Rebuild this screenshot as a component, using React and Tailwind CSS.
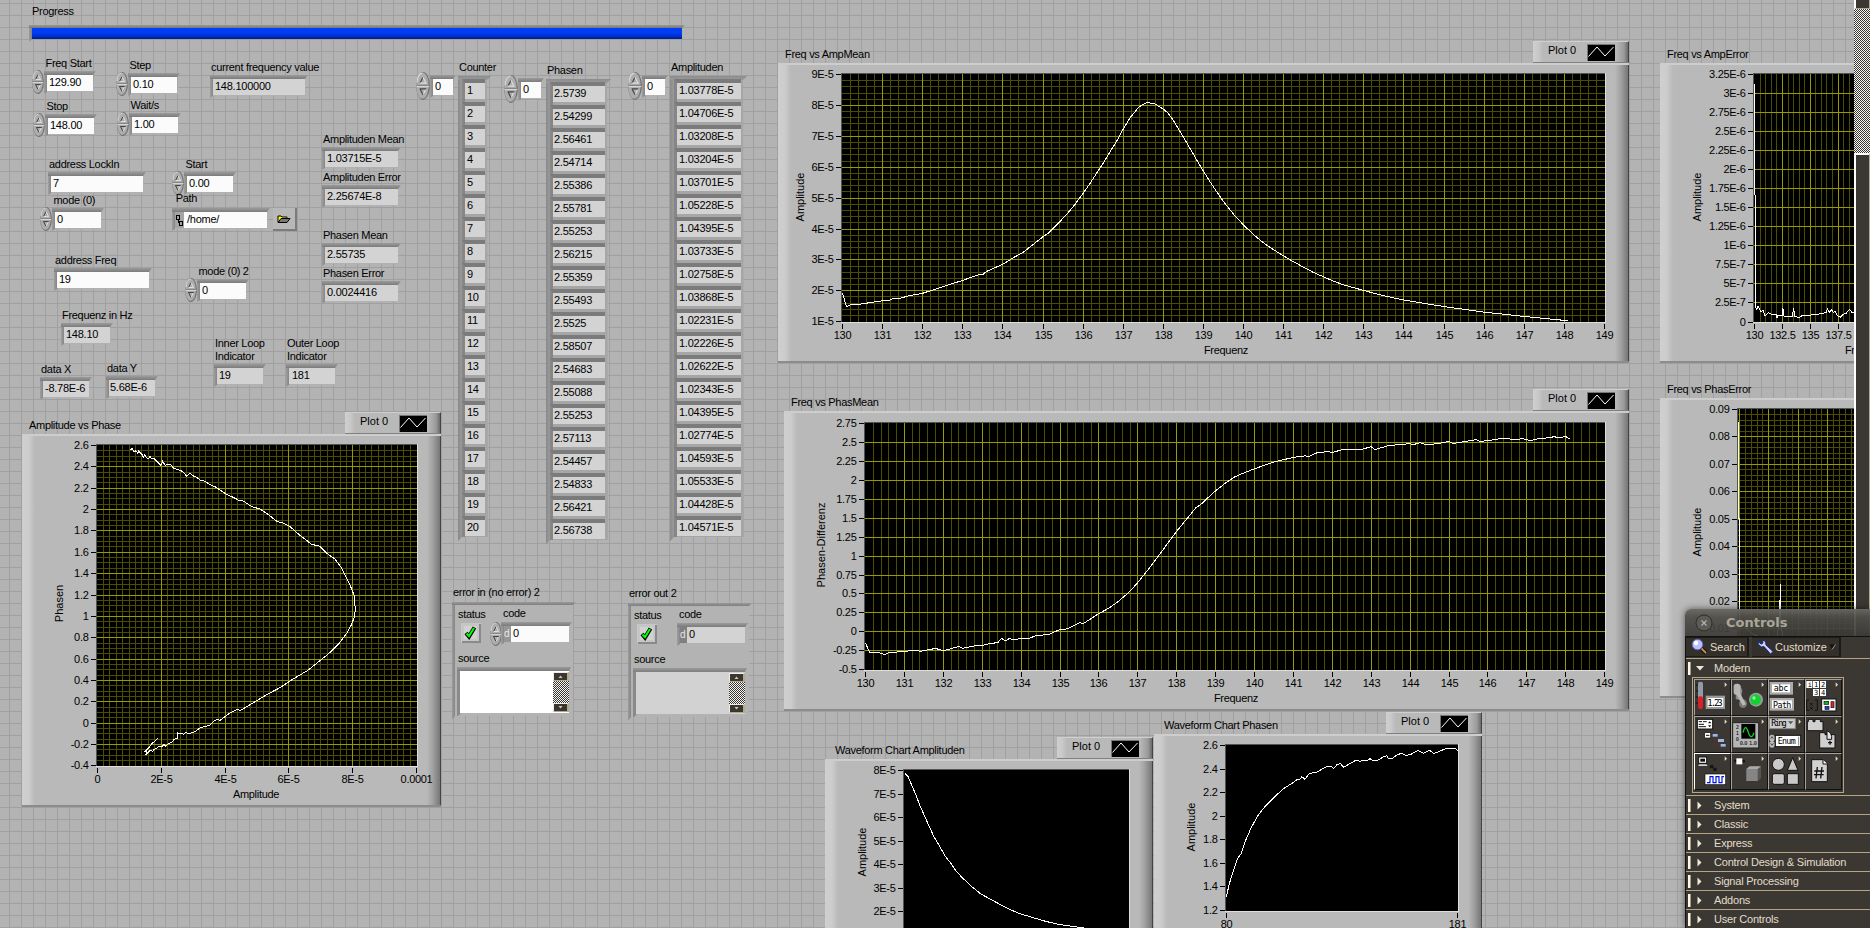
import React from "react";

const FONT = "'Liberation Sans', Arial, sans-serif";

/* ---------- small building blocks of the front panel ---------- */

function Label({ className = "", children }) {
  return <div className={"whitespace-pre text-[11px] leading-[14px] tracking-[-0.3px] text-black " + className}>{children}</div>;
}

function Spinner({ large = false }) {
  return (
    <svg className={"shrink-0 " + (large ? "h-[28px] w-[14px]" : "h-[24px] w-[12px]")} viewBox="0 0 12 24" preserveAspectRatio="none">
      <ellipse cx="6" cy="12" rx="5.9" ry="11.9" fill="#6f6f6f" />
      <ellipse cx="5.500" cy="11.700" rx="5.300" ry="11.300" fill="#adadad" />
      <path d="M0.900 9 Q1.500 1.500 5.500 1" stroke="#dadada" fill="none" />
      <path d="M10 19 Q8.500 22.500 6 23" stroke="#8c8c8c" fill="none" />
      <path d="M0.600 11.500 H11.400" stroke="#858585" />
      <path d="M0.600 12.500 H11.400" stroke="#d5d5d5" />
      <path d="M3.500 9.500 L6 4.500" stroke="#444" fill="none" />
      <path d="M6 4.500 L8.500 9.500 H3.500" stroke="#dedede" fill="none" />
      <path d="M8.500 14.500 L6 19.500" stroke="#dedede" fill="none" />
      <path d="M3.200 14.500 H8.800 M3.500 14.500 L6 19.500" stroke="#444" fill="none" />
    </svg>
  );
}

/* recessed box; w is the width of its bright face */
function Field({ w, pad = "pl-[2px]", grey = false, children }) {
  return (
    <div className="shrink-0 bg-[#b1b1b1] bg-[linear-gradient(to_bottom,#9b9b9b_0,#7b7b7b_4px,transparent_4px),linear-gradient(to_right,#9f9f9f_0,#858585_3px,transparent_3px)] pb-[3px] pl-[3px] pr-[3px] pt-[4px] [clip-path:polygon(0_0,100%_0,calc(100%-3px)_4px,calc(100%-2px)_calc(100%-2px),3px_calc(100%-2px),0_100%)]">
      <div
        className={"h-[16px] whitespace-pre text-[11px] leading-[15px] tracking-[-0.25px] text-black " + pad + " " + (grey ? "bg-[#d3d3d3]" : "bg-[#fbfbfb]")}
        style={{ width: w }}
      >
        {children}
      </div>
    </div>
  );
}

/* a labelled control or indicator that lies freely on the panel */
function Item({ x, y, label, lines, spin, w, v, pad, grey, children }) {
  return (
    <div className="absolute flex flex-col" style={{ left: x, top: y }}>
      {lines && <Label className="h-[13px] pl-px">{lines}</Label>}
      <Label className={spin ? "pl-[13.5px]" : "pl-px"}>{label}</Label>
      {children || (
        <div className="flex items-start">
          {spin && <Spinner />}
          <div className="pt-px"><Field w={w} pad={pad} grey={grey}>{v}</Field></div>
        </div>
      )}
    </div>
  );
}

function ArrayControl({ x, y, label, w, values, pad = "pl-px" }) {
  return (
    <div className="absolute flex gap-[2px]" style={{ left: x, top: y }}>
      <div className="flex items-start pt-[12px]">
        <Spinner large />
        <div className="pt-[3px]"><Field w={20}>0</Field></div>
      </div>
      <div className="flex flex-col gap-[2px]">
        <Label className="w-0 pl-px">{label}</Label>
        <div className="flex flex-col bg-[#a6a6a6] bg-[linear-gradient(to_bottom,#8c8c8c_0,#9b9b9b_4px,transparent_4px),linear-gradient(to_right,#8a8a8a_0,#9a9a9a_4px,transparent_4px)] pb-[2px] pl-[4px] pr-[6px] pt-[3px] [clip-path:polygon(0_0,100%_0,calc(100%-4px)_4px,calc(100%-3px)_calc(100%-4px),4px_calc(100%-4px),0_100%)]">
          {values.map((v, i) => (
            <div key={i} className="h-[23px] border-l-[3px] border-t-[4px] border-l-[#868686] border-t-[#7b7b7b]">
              <div className={"h-[16px] bg-[#d3d3d3] text-[11px] leading-[15px] tracking-[-0.25px] text-black " + pad} style={{ width: w }}>
                {v}
              </div>
            </div>
          ))}
        </div>
      </div>
    </div>
  );
}

/* ---------- charts ---------- */

function Legend() {
  return (
    <div className="flex h-[22px] w-[96px] items-start justify-between border-b border-r border-t border-b-[#808080] border-r-[#444] border-t-[#cfcfcf] bg-[linear-gradient(to_right,#cfcfcf_0,#c9c9c9_5px,#b9b9b9_10px,#b9b9b9_calc(100%-12px),#9a9a9a_calc(100%-4px),#6a6a6a_100%)] pl-[15px] pr-[13px]">
      <span className="pt-px text-[11px] leading-[14px]">Plot 0</span>
      <svg className="mt-[2px]" width="28" height="17">
        <rect width="28" height="17" fill="#000" />
        <path d="M0 0.500H28M0.500 0V17" stroke="#777" />
        <path d="M1.500 12.500 L10 3 L18 12 L26.500 3" stroke="#fff" fill="none" />
      </svg>
    </div>
  );
}

function gridLines(axis, from, to) {
  const major = [];
  const minor = [];
  const n = axis.minor || 1;
  const count = Math.ceil((to - axis.start) / (axis.step / n)) + 1;
  for (let i = 0; i < count; i++) {
    const p = Math.floor(axis.start + (i * axis.step) / n);
    if (p < from || p >= to) continue;
    (i % n === 0 ? major : minor).push(p);
  }
  return { major, minor };
}

function Chart({ title, titlePad = "pl-[7px]", legend = true, panel, plot, xAxis, yAxis, xTitle, yTitle, trace, grid = true }) {
  const [px, py, pw, ph] = panel;
  const [gx, gy, gw, gh] = plot;
  const v = gridLines(xAxis, gx + 1, gx + gw - 1);
  const h = gridLines(yAxis, gy + 1, gy + gh - 1);
  return (
    <section className="absolute flex flex-col" style={{ left: px, top: py - 22, width: pw }}>
      <header className={"flex h-[22px] items-end justify-between " + titlePad}>
        <Label className="pb-[2px]">{title}</Label>
        {legend && <Legend />}
      </header>
      <div className="border-b-2 border-t-2 border-b-[#8c8c8c] border-t-[#cdcdcd] bg-[linear-gradient(to_right,#cfcfcf_0,#cccccc_7px,#b9b9b9_13px,#b9b9b9_calc(100%-14px),#a0a0a0_calc(100%-8px),#777_calc(100%-1px),#444_calc(100%-1px))]">
        <svg className="block" width={pw} height={ph - 4} viewBox={`${px} ${py + 2} ${pw} ${ph - 4}`}>
          <rect x={gx - 1} y={gy - 1} width={gw + 2} height={gh + 2} fill="#dedede" />
          <rect x={gx - 1} y={gy - 1} width={gw + 1} height={gh + 1} fill="#4f5656" />
          <rect x={gx} y={gy} width={gw} height={gh} fill="#000" />
          {grid && (
            <g shapeRendering="crispEdges">
              <path stroke="#4d4d00" d={v.minor.map((p) => `M${p + 0.5} ${gy}v${gh}`).join("") + h.minor.map((p) => `M${gx} ${p + 0.5}h${gw}`).join("")} />
              <path stroke="#999900" d={v.major.map((p) => `M${p + 0.5} ${gy}v${gh}`).join("") + h.major.map((p) => `M${gx} ${p + 0.5}h${gw}`).join("")} />
            </g>
          )}
          <polyline points={trace.map((p) => p.join(",")).join(" ")} fill="none" stroke="#fff" shapeRendering="crispEdges" />
          <g fontFamily={FONT} fontSize="11" fill="#000" letterSpacing="-0.3">
            {yAxis.labels.map((t, i) => {
              const y = Math.floor(yAxis.start + i * yAxis.step) + 0.5;
              return (
                <g key={t + i}>
                  <path d={`M${gx - 6} ${y}h5`} stroke="#000" />
                  <text x={gx - 8.5} y={y + 3.5} textAnchor="end">{t}</text>
                </g>
              );
            })}
            {xAxis.labels.map((t, i) => {
              const x = Math.floor(xAxis.start + i * xAxis.step) + 0.5;
              return (
                <g key={t + i}>
                  <path d={`M${x} ${gy + gh + 2}v5`} stroke="#000" />
                  <text x={x} y={gy + gh + 17} textAnchor="middle">{t}</text>
                </g>
              );
            })}
            {xTitle && <text x={xTitle[1]} y={xTitle[2]} textAnchor="middle">{xTitle[0]}</text>}
            <text transform={`translate(${yTitle[1]} ${yTitle[2]}) rotate(-90)`} textAnchor="middle" letterSpacing="0">{yTitle[0]}</text>
          </g>
        </svg>
      </div>
    </section>
  );
}

const pairs = (s, ox = 0, oy = 0, sx = 1, sy = 1) =>
  s.trim().split(/\s+/).map((p) => {
    const [a, b] = p.split(",").map(Number);
    return [ox + a / sx, oy + b / sy];
  });

const xyTrace = pairs(
  `391,180 397,175 402,186 408,182 414,190 416,183 426,193 430,202 434,194 440,204 446,205 450,200 456,207 462,205 470,213
  483,226 488,214 496,226 502,222 512,223 520,234 530,238 545,243 553,250 560,259 570,250 580,258 590,262 600,270 615,274
  630,284 645,290 660,300 680,313 700,322 715,330 730,333 755,350 780,357 800,370 832,395 850,399 870,410 900,436 935,463
  960,469 980,490 1005,507 1022,530 1040,565 1052,590 1062,615 1063,640 1067,655 1063,680 1055,703 1040,730 1020,757
  1000,778 980,796 960,812 925,840 900,855 870,873 840,893 800,914 770,932 735,953 722,961 710,959 690,969 660,991 650,988
  640,995 630,1005 600,1014 580,1028 565,1030 556,1028 550,1033 543,1029 536,1031 532,1027 533,1045 522,1048 515,1058
  505,1060 498,1069 492,1063 486,1069 475,1070 470,1076 462,1078 458,1084 450,1080 445,1087 438,1093 440,1083 432,1086
  445,1075 455,1062 473,1045`, 0, 390, 3, 3);

const ampMeanTrace = pairs(
  `130,1.92 130.1,1.48 130.2,1.55 130.4,1.56 131,1.68 131.15,1.69 131.3,1.76 131.4,1.75 131.7,1.85 132,1.92 132.5,2.13 133,2.34
  133.4,2.52 133.5,2.53 133.6,2.63 134,2.86 134.3,3.1 134.5,3.24 135,3.75 135.15,3.88 135.42,4.24 135.6,4.49 135.8,4.8 136,5.15
  136.2,5.53 136.5,6.13 136.7,6.56 136.85,6.87 137,7.23 137.17,7.6 137.4,7.96 137.6,8.1 137.8,8.04 138,7.88 138.12,7.75
  138.25,7.52 138.5,6.98 138.75,6.42 139,5.87 139.17,5.52 139.33,5.21 139.5,4.89 139.75,4.48 140,4.13 140.25,3.82 140.5,3.55
  140.75,3.33 141,3.13 141.25,2.94 141.5,2.76 141.75,2.59 142,2.45 142.25,2.31 142.5,2.19 143,2.01 143.5,1.84 144,1.7
  145,1.49 146,1.31 147,1.17 148.1,1.03`).map(([f, a]) => [842.5 + (f - 130) * 40.1, 74.5 + (9 - a) * 30.9]);

const phasMeanTrace = pairs(
  `130,-.147 130.1,-.27 130.3,-.27 130.5,-.30 130.6,-.275 131,-.26 131.3,-.24 131.4,-.26 131.8,-.22 132,-.25 132.4,-.195
  132.5,-.218 132.9,-.175 133,-.18 133.2,-.156 133.4,-.143 133.5,-.09 133.6,-.117 133.7,-.09 133.8,-.103 134,-.09 134.2,-.086
  134.4,-.05 134.7,-.037 135,.029 135.1,.029 135.2,.042 135.5,.12 135.6,.108 136,.24 136.25,.31 136.5,.4 136.8,.534 137,.65
  137.25,.81 137.5,.98 138,1.326 138.3,1.515 138.5,1.64 138.6,1.67 138.85,1.79 139,1.86 139.25,1.96 139.5,2.045 139.75,2.1
  140,2.15 140.5,2.24 141,2.3 141.3,2.32 141.4,2.31 141.6,2.36 141.9,2.377 142,2.364 142.3,2.41 142.6,2.41 142.7,2.4 143,2.44
  143.1,2.403 143.4,2.45 143.7,2.47 144,2.48 144.1,2.47 144.25,2.495 144.4,2.47 144.7,2.48 145,2.51 145.1,2.483 145.3,2.5
  145.7,2.535 145.8,2.51 146.2,2.535 146.3,2.548 146.5,2.548 146.7,2.535 146.9,2.548 147.1,2.52 147.3,2.548 147.6,2.56
  147.7,2.575 147.8,2.56 148,2.575 148.1,2.545`).map(([f, a]) => [865.5 + (f - 130) * 38.9, 423.3 + (2.75 - a) * 75.8]);

const ampErrTrace = pairs(
  `1298,162 1298,495 1300,497 1300,830 1303,838 1306,828 1312,845 1318,842 1322,858 1330,848 1340,854 1348,853 1350,865
  1352,856 1362,858 1364,835 1366,858 1386,860 1389,835 1392,860 1402,862 1410,856 1425,857 1435,852 1440,855 1455,850
  1465,848 1468,837 1472,847 1478,840 1482,848 1486,843 1490,855 1498,862 1505,853 1512,850 1520,838 1526,848 1536,845`, 1200, 30, 2.34, 3);
const phasErrTrace = pairs(
  `1260,155 1260,444 1262,446 1262,760 1275,770 1290,790 1310,800 1350,800 1355,760 1356,690 1358,690 1358,643 1359,760 1364,800 1530,820`, 1200, 370, 2.34, 3);
const waveAmpTrace = pairs(
  `234,218 242,230 250,255 260,285 268,315 278,345 288,375 300,410 312,437 325,468 338,490 350,514 365,535 385,560 405,582
  430,600 460,622 490,640 520,652 550,664 580,673 630,683 660,688`, 800, 700, 2.24, 3);
const wavePhasTrace = pairs(
  `955,590 962,550 970,515 980,475 988,462 997,425 1010,385 1025,348 1040,322 1055,302 1070,282 1085,264 1100,252 1112,240
  1120,238 1124,230 1131,238 1140,222 1150,218 1158,216 1170,207 1180,199 1190,198 1195,206 1202,195 1210,190 1218,202
  1230,192 1245,181 1255,184 1262,180 1270,182 1277,176 1283,182 1295,180 1305,172 1314,167 1318,176 1328,174 1338,164
  1348,160 1357,167 1370,162 1384,151 1397,160 1410,151 1420,161 1435,152 1448,146 1468,146 1473,152`, 800, 700, 2.24, 3);

const FREQS = Array.from({ length: 20 }, (_, i) => String(130 + i));

const CHARTS = [
  {
    title: "Amplitude vs Phase", panel: [22, 434, 419, 373], plot: [97, 445, 320, 321],
    xAxis: { start: 97.2, step: 63.9, minor: 10, labels: ["0", "2E-5", "4E-5", "6E-5", "8E-5", "0.0001"] },
    yAxis: { start: 445.5, step: 21.36, minor: 4, labels: ["2.6", "2.4", "2.2", "2", "1.8", "1.6", "1.4", "1.2", "1", "0.8", "0.6", "0.4", "0.2", "0", "-0.2", "-0.4"] },
    xTitle: ["Amplitude", 256, 798], yTitle: ["Phasen", 62.5, 603.5], trace: xyTrace,
  },
  {
    title: "Freq vs AmpMean", panel: [778, 63, 851, 300], plot: [842, 74, 763, 248],
    xAxis: { start: 842.5, step: 40.1, minor: 5, labels: FREQS },
    yAxis: { start: 74.5, step: 30.9, minor: 5, labels: ["9E-5", "8E-5", "7E-5", "6E-5", "5E-5", "4E-5", "3E-5", "2E-5", "1E-5"] },
    xTitle: ["Frequenz", 1226, 354], yTitle: ["Amplitude", 804, 197], trace: ampMeanTrace,
  },
  {
    title: "Freq vs PhasMean", panel: [784, 411, 845, 300], plot: [865, 423, 740, 247],
    xAxis: { start: 865.5, step: 38.9, minor: 5, labels: FREQS },
    yAxis: { start: 423.5, step: 18.94, labels: ["2.75", "2.5", "2.25", "2", "1.75", "1.5", "1.25", "1", "0.75", "0.5", "0.25", "0", "-0.25", "-0.5"] },
    xTitle: ["Frequenz", 1236, 702], yTitle: ["Phasen-Differenz", 825, 545], trace: phasMeanTrace,
  },
  {
    title: "Freq vs AmpError", legend: false, panel: [1660, 63, 420, 300], plot: [1754, 74, 300, 248],
    xAxis: { start: 1754.7, step: 27.8, minor: 5, labels: ["130", "132.5", "135", "137.5"] },
    yAxis: { start: 74.5, step: 19.04, labels: ["3.25E-6", "3E-6", "2.75E-6", "2.5E-6", "2.25E-6", "2E-6", "1.75E-6", "1.5E-6", "1.25E-6", "1E-6", "7.5E-7", "5E-7", "2.5E-7", "0"] },
    xTitle: ["Frequenz", 1867, 354], yTitle: ["Amplitude", 1701, 197], trace: ampErrTrace,
  },
  {
    title: "Freq vs PhasError", legend: false, panel: [1660, 398, 420, 300], plot: [1738, 409, 320, 248],
    xAxis: { start: 1739.3, step: 29.5, minor: 5, labels: [] },
    yAxis: { start: 409.5, step: 27.43, minor: 5, labels: ["0.09", "0.08", "0.07", "0.06", "0.05", "0.04", "0.03", "0.02", "0.01", "0"] },
    yTitle: ["Amplitude", 1701, 532], trace: phasErrTrace,
  },
  {
    title: "Waveform Chart Amplituden", titlePad: "pl-[10px]", grid: false, panel: [825, 759, 328, 260], plot: [904, 770, 225, 200],
    xAxis: { start: 904, step: 225, labels: [] },
    yAxis: { start: 770.5, step: 23.5, labels: ["8E-5", "7E-5", "6E-5", "5E-5", "4E-5", "3E-5", "2E-5"] },
    yTitle: ["Amplitude", 866, 852], trace: waveAmpTrace,
  },
  {
    title: "Waveform Chart Phasen", titlePad: "pl-[10px]", grid: false, panel: [1154, 734, 328, 260], plot: [1226, 745, 232, 166],
    xAxis: { start: 1226.5, step: 231, labels: ["80", "181"] },
    yAxis: { start: 745.5, step: 23.57, labels: ["2.6", "2.4", "2.2", "2", "1.8", "1.6", "1.4", "1.2"] },
    yTitle: ["Amplitude", 1195, 827], trace: wavePhasTrace,
  },
];

/* ---------- scalar controls and indicators ---------- */

const ITEMS = [
  { x: 32, y: 56, label: "Freq Start", w: 46, v: "129.90", spin: true },
  { x: 116, y: 58, label: "Step", w: 46, v: "0.10", spin: true },
  { x: 33, y: 99, label: "Stop", w: 46, v: "148.00", spin: true },
  { x: 117, y: 98, label: "Wait/s", w: 46, v: "1.00", spin: true },
  { x: 48, y: 157, label: "address LockIn", w: 92, v: "7" },
  { x: 40, y: 193, label: "mode (0)", w: 46, v: "0", spin: true },
  { x: 172, y: 157, label: "Start", w: 46, v: "0.00", spin: true },
  { x: 54, y: 253, label: "address Freq", w: 92, v: "19" },
  { x: 185, y: 264, label: "mode (0) 2", w: 46, v: "0", spin: true },
  { x: 210, y: 60, label: "current frequency value", w: 92, v: "148.100000", grey: true },
  { x: 322, y: 132, label: "Amplituden Mean", w: 73, v: "1.03715E-5", grey: true },
  { x: 322, y: 170, label: "Amplituden Error", w: 73, v: "2.25674E-8", grey: true },
  { x: 322, y: 228, label: "Phasen Mean", w: 73, v: "2.55735", grey: true },
  { x: 322, y: 266, label: "Phasen Error", w: 73, v: "0.0024416", grey: true },
  { x: 61, y: 308, label: "Frequenz in Hz", w: 46, v: "148.10", grey: true },
  { x: 40, y: 362, label: "data X", w: 46, v: "-8.78E-6", grey: true },
  { x: 106, y: 361, label: "data Y", w: 46, v: "5.68E-6", grey: true, pad: "pl-px" },
  { x: 214, y: 336, lines: "Inner Loop", label: "Indicator", w: 46, v: "19", grey: true },
  { x: 286, y: 336, lines: "Outer Loop", label: "Indicator", w: 46, v: "181", grey: true, pad: "pl-[3px]" },
];

const PHASES = ["2.5739", "2.54299", "2.56461", "2.54714", "2.55386", "2.55781", "2.55253", "2.56215", "2.55359", "2.55493", "2.5525", "2.58507", "2.54683", "2.55088", "2.55253", "2.57113", "2.54457", "2.54833", "2.56421", "2.56738"];
const AMPS = ["1.03778E-5", "1.04706E-5", "1.03208E-5", "1.03204E-5", "1.03701E-5", "1.05228E-5", "1.04395E-5", "1.03733E-5", "1.02758E-5", "1.03868E-5", "1.02231E-5", "1.02226E-5", "1.02622E-5", "1.02343E-5", "1.04395E-5", "1.02774E-5", "1.04593E-5", "1.05533E-5", "1.04428E-5", "1.04571E-5"];

function ArrowButton({ d }) {
  return (
    <div className="flex h-[9px] items-center justify-center border-b border-l border-r-2 border-t border-b-[#b5a88e] border-l-[#eee] border-r-[#b5a88e] border-t-[#eee] bg-[#3a3731]">
      <svg width="11" height="7"><path d={d} fill="#d8ccb0" /></svg>
    </div>
  );
}

function ListScroll() {
  return (
    <div className="flex w-[16px] flex-col">
      <ArrowButton d="M3.500 5L5.500 2.500L7.500 5Z" />
      <div className="grow bg-[repeating-conic-gradient(#3a3731_0_25%,#f6f6f6_0_50%)] bg-[length:2px_2px]" />
      <ArrowButton d="M3.500 2L5.500 4.500L7.500 2Z" />
    </div>
  );
}

function ErrorCluster({ x, y, title, output = false }) {
  return (
    <section className="absolute flex flex-col gap-[3px]" style={{ left: x, top: y }}>
      <Label className="pl-px">{title}</Label>
      <div className="flex h-[118px] w-[124px] flex-col bg-[#b3b3b3] bg-[linear-gradient(to_bottom,#9a9a9a_0,#7e7e7e_3px,transparent_3px),linear-gradient(to_right,#9c9c9c_0,#848484_3px,transparent_3px)] pl-[5px] pt-[4px] [clip-path:polygon(0_0,100%_0,calc(100%-3px)_3px,calc(100%-3px)_calc(100%-4px),3px_calc(100%-4px),0_100%)]">
        <div className="flex h-[45px]">
          <div className="flex w-[33px] flex-col gap-[2px] pl-px pt-px">
            <Label>status</Label>
            <svg className="ml-[3px]" width="20" height="20">
              <rect width="20" height="20" fill="#c6c6c6" />
              <path d="M19 1V19H1" stroke="#8a8a8a" strokeWidth="2" fill="none" />
              <rect x="3" y="3" width="13" height="13" fill="#d2d2d2" />
              <path d="M5 10 L8 13.500 L13.500 4.500" stroke="#000" strokeWidth="4" fill="none" />
              <path d="M5.500 10.500 L8 13 L13 5" stroke="#00ff00" strokeWidth="2.200" fill="none" />
            </svg>
          </div>
          <div className="flex flex-col gap-[2px]">
            <Label className="pl-[13px]">code</Label>
            <div className="flex items-start">
              <div className="w-[11px]">{!output && <Spinner />}</div>
              <Field w={65} grey={output} pad="pl-0">
                <span className={"mr-[2px] inline-block h-[16px] w-[7px] text-[10px] leading-[16px] text-[#e6e6e6] " + (output ? "bg-[#808080]" : "bg-[#969696]")}>d</span>0
              </Field>
            </div>
          </div>
        </div>
        <Label className="pl-px">source</Label>
        <div className="mt-[2px] h-[50px] w-[114px] bg-[linear-gradient(to_bottom,#999_0,#7e7e7e_4px,#8a8a8a_4px)] pl-[3px] pt-[4px] [clip-path:polygon(0_0,100%_0,calc(100%-2px)_4px,calc(100%-2px)_calc(100%-4px),4px_calc(100%-4px),0_100%)]">
          <div className={"flex h-[42px] w-[109px] justify-end py-px " + (output ? "bg-[#d2d2d2]" : "bg-white")}>
            <ListScroll />
          </div>
        </div>
      </div>
    </section>
  );
}

function PathControl() {
  return (
    <Item x={172} y={191} label=" Path">
      <div className="flex items-start gap-[3px] pt-[2px]">
        <div className="pt-px">
          <Field w={92} pad="pl-0">
            <span className="mr-[3px] inline-flex h-[16px] w-[9px] bg-[#a4a4a4] align-top">
              <svg width="9" height="16"><path d="M1.500 3.500h3v4h-3zM4.500 9.500h3v4h-3zM3 7.500v3h2" stroke="#000" fill="none" shapeRendering="crispEdges" /></svg>
            </span>
            /home/
          </Field>
        </div>
        <div className="mt-px flex h-[23px] w-[24px] items-center justify-center border-b-2 border-r-2 border-[#7c7c7c] bg-[#b8b8b8]">
          <svg width="14" height="10">
            <path d="M1 8V2H4L5 3H10V5" fill="#ffff00" stroke="#000" />
            <path d="M1 8.500L4 4.500H13L10 8.500Z" fill="#777" stroke="#000" />
          </svg>
        </div>
      </div>
    </Item>
  );
}

function Progress() {
  return (
    <div className="absolute left-[29px] top-[4px] flex flex-col gap-[7px]">
      <Label className="pl-[3px]">Progress</Label>
      <div className="h-[17px] w-[656px] bg-[linear-gradient(to_bottom,#9a9a9a_0,#777_3px,transparent_3px),linear-gradient(to_right,#9c9c9c_0,#828282_3px,transparent_3px)] pl-[3px] pt-[3px] [clip-path:polygon(0_0,100%_0,calc(100%-3px)_3px,calc(100%-3px)_calc(100%-3px),3px_calc(100%-3px),0_100%)]">
        <div className="h-[11px] w-[650px] bg-[linear-gradient(to_bottom,#0040f8_0,#003cf4_45%,#0030c8_75%,#001c88_100%)]" />
      </div>
    </div>
  );
}

/* ---------- controls palette ---------- */

const PALETTE_ICONS = [
  <g key="num">
    <path d="M5 18h8M5 36h8M5 54h8M5 72h8" stroke="#111" strokeWidth="3" />
    <rect x="12" y="8" width="15" height="54" rx="6" fill="#8f9bab" />
    <rect x="12" y="52" width="15" height="38" rx="6" fill="#d8202a" />
    <rect x="35" y="50" width="58" height="40" fill="#999" />
    <rect x="41" y="57" width="47" height="27" fill="#fff" />
    <text x="40" y="80" fontSize="27" textLength="46">1.23</text>
  </g>,
  <g key="bool">
    <path d="M16 24 Q18 14 28 18 L34 36 L28 64 L14 60Z" fill="#8d8d8d" />
    <rect x="8" y="14" width="20" height="34" rx="9" fill="#b5b5b5" />
    <ellipse cx="36" cy="74" rx="12" ry="13" fill="#777" />
    <path d="M20 40 L40 78" stroke="#b9b9b9" strokeWidth="11" />
    <circle cx="75" cy="62" r="21" fill="#9b9b9b" />
    <circle cx="74" cy="62" r="16" fill="#12d030" />
    <circle cx="69" cy="57" r="5" fill="#8cff9a" />
  </g>,
  <g key="str">
    <rect x="5" y="9" width="70" height="38" fill="#aaa" /><rect x="12" y="16" width="54" height="24" fill="#fff" />
    <text x="17" y="37" fontSize="25" textLength="44">abc</text>
    <rect x="5" y="57" width="73" height="38" fill="#aaa" /><rect x="12" y="64" width="60" height="24" fill="#fff" />
    <text x="15" y="86" fontSize="25" textLength="55">Path</text>
  </g>,
  <g key="arr">
    <path d="M4 6h18v21H4zM24 6h18v21H24zM45 6h18v21H45zM24 30h18v21H24zM45 30h18v21H45z" fill="#fff" />
    <text x="8" y="24" fontSize="21">i</text><text x="27" y="24" fontSize="21">1</text><text x="48" y="24" fontSize="21">2</text>
    <text x="27" y="48" fontSize="21">3</text><text x="48" y="48" fontSize="21">4</text>
    <path d="M12 63H5V94H12M30 63H37V94H30M15 72l8 8m0-8l-8 8M15 84l8 8m0-8l-8 8" stroke="#111" strokeWidth="3" fill="none" />
    <rect x="50" y="60" width="43" height="36" fill="#fff" stroke="#111" strokeWidth="3" />
    <rect x="57" y="67" width="14" height="9" fill="#15b030" stroke="#111" strokeWidth="2" />
    <rect x="60" y="82" width="12" height="9" fill="#1744e0" stroke="#111" strokeWidth="2" />
    <rect x="78" y="68" width="9" height="18" fill="#e02030" stroke="#111" strokeWidth="2" />
  </g>,
  <g key="list">
    <rect x="10" y="10" width="46" height="29" fill="#fff" stroke="#111" strokeWidth="3" />
    <path d="M14 17h10M27 17h11M14 25h16M14 32h22" stroke="#111" strokeWidth="3" />
    <path d="M42 22l5-6 5 6zM42 28l5 6 5-6z" fill="#111" />
    <rect x="32" y="50" width="18" height="16" fill="#fff" stroke="#111" strokeWidth="2" /><path d="M36 58h10" stroke="#111" strokeWidth="3" />
    <path d="M50 58h8M62 62V92M62 74h10M62 88h20" stroke="#5b3030" strokeWidth="3" fill="none" />
    <rect x="56" y="54" width="15" height="8" fill="#9fb4e8" /><rect x="72" y="69" width="18" height="9" fill="#9fb4e8" /><rect x="80" y="84" width="15" height="8" fill="#9fb4e8" />
  </g>,
  <g key="graph">
    <rect x="5" y="20" width="78" height="76" fill="#b5b5b5" stroke="#222" strokeWidth="3" />
    <rect x="31" y="24" width="42" height="44" fill="#000" />
    <path d="M36 50 Q43 22 51 46 Q60 76 69 50" stroke="#10d020" strokeWidth="4" fill="none" />
    <text x="14" y="38" fontSize="16">2</text><text x="14" y="57" fontSize="16">1</text><text x="14" y="76" fontSize="16">0</text>
    <text x="26" y="88" fontSize="16" textLength="52">0.0 1.0</text>
  </g>,
  <g key="ring">
    <rect x="4" y="8" width="78" height="30" fill="#cdcdcd" stroke="#888" strokeWidth="3" />
    <text x="10" y="30" fontSize="25" textLength="46">Ring</text><path d="M60 16h16l-8 9z" fill="#555" />
    <rect x="4" y="56" width="16" height="20" rx="8" fill="#bbb" /><rect x="4" y="75" width="16" height="20" rx="8" fill="#bbb" />
    <path d="M8 68l4-6 4 6M8 82l4 6 4-6" stroke="#111" strokeWidth="2" fill="none" />
    <rect x="22" y="58" width="76" height="34" fill="#fff" stroke="#111" strokeWidth="3" />
    <text x="29" y="84" fontSize="25" textLength="54">Enum</text><path d="M92 62v27" stroke="#888" strokeWidth="3" />
  </g>,
  <g key="cont">
    <path d="M7 17H10V10H24V17H30V10H46V17H54V44H7Z" fill="#d0d0d0" stroke="#111" strokeWidth="3" />
    <path d="M44 62V50H60V56H90V96H44Z" fill="#d0d0d0" stroke="#111" strokeWidth="3" />
    <path d="M66 44 Q82 50 80 70H66Z" fill="#e3e3e3" stroke="#111" strokeWidth="3" />
    <path d="M75 74V86M69 80H81" stroke="#111" strokeWidth="4" />
  </g>,
  <g key="io">
    <rect x="14" y="12" width="24" height="19" fill="#fff" stroke="#111" strokeWidth="3" /><rect x="19" y="17" width="14" height="9" fill="#111" />
    <path d="M14 33H38L43 40H11Z" fill="#eee" stroke="#111" strokeWidth="2" />
    <path d="M50 38L66 52M50 38v8M50 38h8M66 52v-8M66 52h-8" stroke="#111" strokeWidth="4" />
    <rect x="33" y="63" width="62" height="32" fill="#fff" stroke="#111" strokeWidth="2" />
    <path d="M39 89H48V71H57V89H66V71H75V89H84V71H90" stroke="#0010e0" strokeWidth="3.500" fill="none" />
  </g>,
  <g key="dec">
    <path d="M10 24H42" stroke="#111" strokeWidth="8" /><rect x="16" y="16" width="18" height="18" fill="#fff" />
    <path d="M46 48L56 40H90V76L80 84H46Z" fill="#555" /><path d="M46 48L56 40H90L80 48Z" fill="#aaa" /><rect x="46" y="48" width="34" height="36" fill="#858585" />
  </g>,
  <g key="shapes" fill="#c9c9c9" stroke="#111" strokeWidth="3">
    <circle cx="31" cy="34" r="18" /><path d="M74 14L90 52H58Z" />
    <rect x="13" y="62" width="36" height="32" rx="6" /><rect x="58" y="62" width="33" height="32" />
  </g>,
  <g key="hash">
    <path d="M20 20H54L67 33V86H20Z" fill="#d2d2d2" stroke="#111" strokeWidth="3" /><path d="M54 20V33H67" fill="#fff" stroke="#111" strokeWidth="3" />
    <path d="M37 42L33 76M51 42L47 76M28 54H57M27 65H56" stroke="#111" strokeWidth="4" />
  </g>,
];

function PaletteRow({ open, children }) {
  return (
    <div className="flex h-[19px] items-center border-t border-[#b4a586] pl-[2px] text-[11px] leading-[16px] tracking-[-0.2px] text-[#e4dcc8]">
      <span className="h-[13px] w-[3px] border-r border-[#a89b80] bg-[#fbf7ec]" />
      <svg className="ml-[5px]" width="9" height="9">
        <path d={open ? "M0 2H8L4 6.500Z" : "M1.500 0.500L5.500 4.500L1.500 8.500Z"} fill="#f0e8d6" />
      </svg>
      <span className="mb-px ml-[9px] whitespace-nowrap">{children}</span>
    </div>
  );
}

function Palette() {
  return (
    <div className="absolute left-[1685px] top-[609px] flex h-[319px] w-[185px] flex-col overflow-hidden rounded-tl-[6px] shadow-[0_0_7px_rgba(0,0,0,0.55)]">
      <div className="flex h-[27px] items-center bg-[linear-gradient(to_bottom,rgba(105,104,98,0.97)_0,rgba(78,77,72,0.94)_30%,rgba(60,59,55,0.93)_100%)] pl-[10px]">
        <svg width="18" height="18">
          <circle cx="9" cy="9" r="8" fill="#5c5b57" stroke="#2f2e2b" />
          <path d="M6.500 6.500L11.500 11.500M11.500 6.500L6.500 11.500" stroke="#b5b2aa" strokeWidth="1.200" />
        </svg>
        <span className="ml-[13px] font-['DejaVu_Sans'] text-[13px] font-bold text-[#aaa69b]">Controls</span>
      </div>
      <div className="flex grow flex-col border-l border-t border-[#111] bg-[#3b3834]">
        <div className="flex h-[21px] gap-[3px] bg-[#3b3834] text-[11px] text-[#e4dcc8]">
          <div className="flex h-[20px] w-[63px] items-center border-b border-r-2 border-t border-[#1c1b18] bg-[#33302c] pl-[5px]">
            <svg width="18" height="18">
              <path d="M10 10L15 15" stroke="#111" strokeWidth="4" /><path d="M10.500 10.500L15 15" stroke="#c98a4a" strokeWidth="2" />
              <circle cx="6.500" cy="6.500" r="5.300" fill="#b9c0ff" stroke="#5a62b0" /><circle cx="5" cy="5" r="2.200" fill="#fff" />
            </svg>
            <span className="ml-px">Search</span>
          </div>
          <div className="flex h-[20px] w-[89px] items-center border-b border-r-2 border-t border-[#1c1b18] bg-[#33302c] pl-[5px]">
            <svg width="17" height="17">
              <path d="M2 1L1 5L4.500 8L7 7.500L13.500 15L16 12.500L9 6L8.500 2.500L5.500 1L6 4L4.500 5L2.500 4Z" fill="#c9d2ff" stroke="#1a1f70" strokeWidth="0.900" />
            </svg>
            <span className="ml-px">Customize</span>
            <svg className="ml-[2px]" width="7" height="6"><path d="M0.500 0.500H6.500L3 5.500Z" fill="#111" /><path d="M6.500 0.500L3 5.500" stroke="#999" /></svg>
          </div>
        </div>
        <PaletteRow open>Modern</PaletteRow>
        <div className="mb-[2px] ml-[6px] grid h-[116px] w-[152px] grid-cols-[repeat(4,37px)] grid-rows-[repeat(3,37px)] border border-[#b4a586] pl-px pt-px">
          {PALETTE_ICONS.map((icon, i) => (
            <div key={i} className={"border-b border-l border-r border-t border-b-[#111] border-r-[#111] " + (i === 8 ? "border-l-white border-t-white" : "border-l-[#a5a29c] border-t-[#a5a29c]")}>
              <svg className="font-['DejaVu_Sans_Mono',monospace]" width="35" height="35" viewBox="3 3 105 105">
                {icon}
                <path d="M92 10L99 17L92 24Z" fill="#e4dcc8" />
              </svg>
            </div>
          ))}
        </div>
        {["System", "Classic", "Express", "Control Design & Simulation", "Signal Processing", "Addons", "User Controls"].map((t) => (
          <PaletteRow key={t}>{t}</PaletteRow>
        ))}
      </div>
    </div>
  );
}

export default function App() {
  return (
    <div className="relative flex h-[928px] w-[1870px] overflow-hidden font-['Liberation_Sans',Arial,sans-serif]">
      <main className="relative h-full grow overflow-hidden bg-[#b3b3b3] bg-[linear-gradient(to_right,#a0a0a0_1px,transparent_1px),linear-gradient(to_bottom,#a0a0a0_1px,transparent_1px)] bg-[length:12px_12px] bg-[position:9px_3px]">
        <Progress />
        {ITEMS.map((item, i) => <Item key={i} {...item} />)}
        <PathControl />
        <ArrayControl x={416} y={60} label="Counter" w={20} values={PHASES.map((_, i) => i + 1)} pad="pl-[2px]" />
        <ArrayControl x={504} y={63} label="Phasen" w={52} values={PHASES} />
        <ArrayControl x={628} y={60} label="Amplituden" w={64} values={AMPS} pad="pl-[2px]" />
        <ErrorCluster x={452} y={585} title="error in (no error) 2" />
        <ErrorCluster x={628} y={586} title="error out 2" output />
        {CHARTS.map((c) => <Chart key={c.title} {...c} />)}
      </main>
      <aside className="flex h-full w-[16px] shrink-0 flex-col">
        <div className="h-[9px] border-b border-l-2 border-r border-b-[#b5a88e] border-l-white border-r-[#b5a88e] bg-[#3b3834]" />
        <div className="h-[144px] bg-[repeating-conic-gradient(#3b3834_0_25%,#f6f6f6_0_50%)] bg-[length:2px_2px]" />
        <div className="grow border-l-2 border-r border-t-2 border-l-white border-r-[#b5a88e] border-t-white bg-[#3b3834]" />
      </aside>
      <Palette />
    </div>
  );
}
